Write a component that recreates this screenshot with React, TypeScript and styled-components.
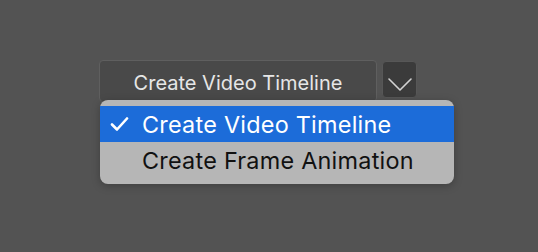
import React from "react";
import styled, { createGlobalStyle } from "styled-components";

const Global = createGlobalStyle`
  html, body { margin: 0; padding: 0; background: #535353; }
  body { width: 538px; height: 252px; overflow: hidden; font-family: Inter, "Noto Sans", sans-serif; }
`;

const Stage = styled.div`
  position: relative;
  width: 538px;
  height: 252px;
  padding: 60px 0 0 99px;
  box-sizing: border-box;
`;

const Controls = styled.div`
  display: flex;
  align-items: flex-start;
  gap: 5px;
`;

const MainButton = styled.div`
  width: 278px;
  height: 42px;
  box-sizing: border-box;
  background: #494949;
  border: 1px solid #5f5f5f;
  border-radius: 4px;
  display: flex;
  align-items: flex-start;
  justify-content: center;
  padding-top: 10px;
  color: #e6e6e6;
  font-size: 20px;
  line-height: normal;
`;

const ArrowButton = styled.div`
  margin-top: 1px;
  width: 35px;
  height: 37px;
  box-sizing: border-box;
  background: #3b3b3b;
  border: 1px solid #575757;
  border-radius: 4px;
  display: flex;
  align-items: center;
  justify-content: center;
  padding-top: 9px;
`;

const Menu = styled.div`
  position: absolute;
  left: 100px;
  top: 100px;
  width: 354px;
  box-sizing: border-box;
  padding: 6px 0;
  background: #b6b6b6;
  border-radius: 8px;
  box-shadow: 0 2px 8px rgba(0, 0, 0, 0.25);
  display: flex;
  flex-direction: column;
`;

const Item = styled.div<{ $active?: boolean }>`
  height: 36px;
  display: flex;
  align-items: center;
  background: ${(p) => (p.$active ? "#1c6cd9" : "transparent")};
  color: ${(p) => (p.$active ? "#ffffff" : "#111111")};
  font-size: 23.4px;
  letter-spacing: 0.25px;
  line-height: normal;
`;

const CheckSlot = styled.span`
  width: 42px;
  display: flex;
  justify-content: flex-end;
  padding-right: 13px;
  box-sizing: border-box;
`;

const Check = () => (
  <svg width="19" height="14" viewBox="0 0 19 14">
    <path d="M2 7.5 L7 12.5 L17 1.5" fill="none" stroke="#ffffff" strokeWidth="2.6" strokeLinecap="round" strokeLinejoin="round" />
  </svg>
);

const Chevron = () => (
  <svg width="24" height="13" viewBox="0 0 24 13">
    <path d="M1 1 L12 12 L23 1" fill="none" stroke="#d2d2d2" strokeWidth="1.6" strokeLinecap="round" strokeLinejoin="round" />
  </svg>
);

export default function App() {
  return (
    <>
      <Global />
      <Stage>
        <Controls>
          <MainButton>Create Video Timeline</MainButton>
          <ArrowButton>
            <Chevron />
          </ArrowButton>
        </Controls>
        <Menu>
          <Item $active>
            <CheckSlot>
              <Check />
            </CheckSlot>
            Create Video Timeline
          </Item>
          <Item>
            <CheckSlot />
            Create Frame Animation
          </Item>
        </Menu>
      </Stage>
    </>
  );
}
